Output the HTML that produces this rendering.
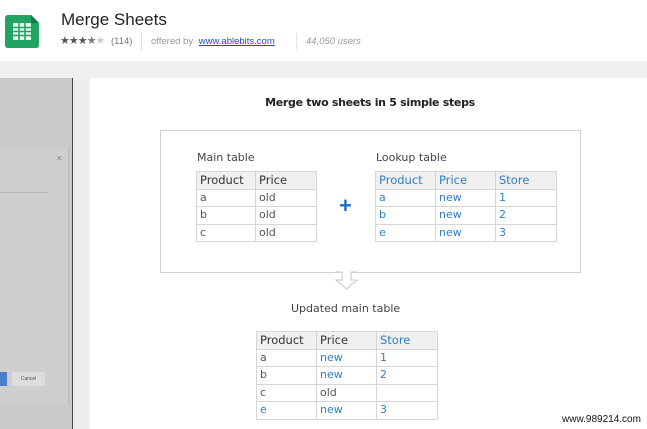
<!DOCTYPE html>
<html><head><style>
body{margin:0;width:647px;height:429px;position:relative;overflow:hidden;background:#fff;font-family:"Liberation Sans",sans-serif}
.a{position:absolute}
table{position:absolute;border-collapse:collapse;font-family:"DejaVu Sans","Liberation Sans",sans-serif;font-size:11px;color:#555}
td{border:1px solid #d6d6d6;height:16.5px;padding:0 3px;line-height:16px}
tr:first-child td{background:#f0f0f0;color:#333;font-size:11.5px}
.b{color:#2f7fc8!important}
.lbl{position:absolute;font-family:"DejaVu Sans",sans-serif;font-size:11px;color:#444}
</style></head><body>
<div class="a" style="left:0;top:61px;width:647px;height:17px;background:#efefef"></div>
<div class="a" style="left:0;top:78px;width:72px;height:351px;background:#c9c9c9"></div>
<div class="a" style="left:72px;top:78px;width:1px;height:351px;background:#444"></div>
<div class="a" style="left:73px;top:78px;width:17px;height:351px;background:#eeeeee"></div>
<div class="a" style="left:0;top:148px;width:68px;height:256px;background:#cfcfcf;border-right:1px solid #bbb"></div>
<div class="a" style="left:56px;top:154px;font-size:8px;color:#888">✕</div>
<div class="a" style="left:0;top:192px;width:48px;height:1px;background:#b8b8b8"></div>
<div class="a" style="left:0;top:372px;width:7px;height:14px;background:#4a7fd0"></div>
<div class="a" style="left:12px;top:372px;width:33px;height:14px;background:#ddd;font-size:5px;color:#555;text-align:center;line-height:14px">Cancel</div>
<svg class="a" style="left:5px;top:15px" width="34" height="33" viewBox="0 0 34 33"><path d="M3 0H26L34 8V30Q34 33 31 33H3Q0 33 0 30V3Q0 0 3 0Z" fill="#1fa463"/><path d="M26 0V8H34Z" fill="#127a45"/><rect x="8" y="8" width="18" height="17" fill="#e8f5ec"/><g stroke="#1fa463" stroke-width="1.6"><line x1="8" y1="12.5" x2="26" y2="12.5"/><line x1="8" y1="16.5" x2="26" y2="16.5"/><line x1="8" y1="20.5" x2="26" y2="20.5"/><line x1="14" y1="8" x2="14" y2="25"/><line x1="20" y1="8" x2="20" y2="25"/></g></svg>
<div class="a" style="left:61px;top:10px;font-size:17px;color:#222">Merge Sheets</div>
<div class="a" style="left:60px;top:34px;font-size:11px;color:#555;letter-spacing:-1px;font-family:'DejaVu Sans',sans-serif">★★★<span style="color:#777">★</span><span style="color:#ccc">★</span></div>
<div class="a" style="left:111px;top:36px;font-size:9.5px;color:#777">(114)</div>
<div class="a" style="left:141px;top:33px;width:1px;height:17px;background:#ddd"></div>
<div class="a" style="left:151px;top:36px;font-size:9.5px;color:#999">offered by <span style="color:#1a4fc0;text-decoration:underline;margin-left:3px">www.ablebits.com</span></div>
<div class="a" style="left:296px;top:33px;width:1px;height:17px;border-left:1px dotted #ccc"></div>
<div class="a" style="left:306px;top:36px;font-size:9.5px;color:#999;font-style:italic">44,050 users</div>
<div class="a" style="left:90px;top:96px;width:560px;text-align:center;font-family:'DejaVu Sans',sans-serif;font-size:11px;font-weight:bold;color:#222;letter-spacing:-0.3px">Merge two sheets in 5 simple steps</div>
<div class="a" style="left:160px;top:130px;width:419px;height:141px;border:1px solid #cfcfcf"></div>
<svg class="a" style="left:334px;top:270px" width="26" height="22"><path d="M2 1.5H8V10H2L12.5 19L23 10H17V1.5H23" fill="#fff" stroke="#c8c8c8"/><rect x="2.5" y="0" width="20" height="1.5" fill="#fff"/></svg>
<div class="lbl" style="left:197px;top:151px">Main table</div>
<table style="left:196px;top:171px;width:121px"><tr><td style="width:52px">Product</td><td>Price</td></tr><tr><td>a</td><td>old</td></tr><tr><td>b</td><td>old</td></tr><tr><td>c</td><td>old</td></tr></table>
<div class="a" style="left:339px;top:194px;font-size:22px;font-weight:bold;color:#1f6fbf;line-height:24px">+</div>
<div class="lbl" style="left:376px;top:151px">Lookup table</div>
<table style="left:375px;top:171px;width:182px"><tr><td class="b" style="width:53px">Product</td><td class="b" style="width:53px">Price</td><td class="b">Store</td></tr><tr><td class="b">a</td><td class="b">new</td><td class="b">1</td></tr><tr><td class="b">b</td><td class="b">new</td><td class="b">2</td></tr><tr><td class="b">e</td><td class="b">new</td><td class="b">3</td></tr></table>
<div class="lbl" style="left:291px;top:302px">Updated main table</div>
<table style="left:256px;top:331px;width:182px"><tr><td style="width:53px">Product</td><td style="width:53px">Price</td><td class="b">Store</td></tr><tr><td>a</td><td class="b">new</td><td class="b">1</td></tr><tr><td>b</td><td class="b">new</td><td class="b">2</td></tr><tr><td>c</td><td>old</td><td></td></tr><tr><td class="b">e</td><td class="b">new</td><td class="b">3</td></tr></table>
<div class="a" style="left:562px;top:414px;font-size:10px;color:#111">www.989214.com</div>
</body></html>
